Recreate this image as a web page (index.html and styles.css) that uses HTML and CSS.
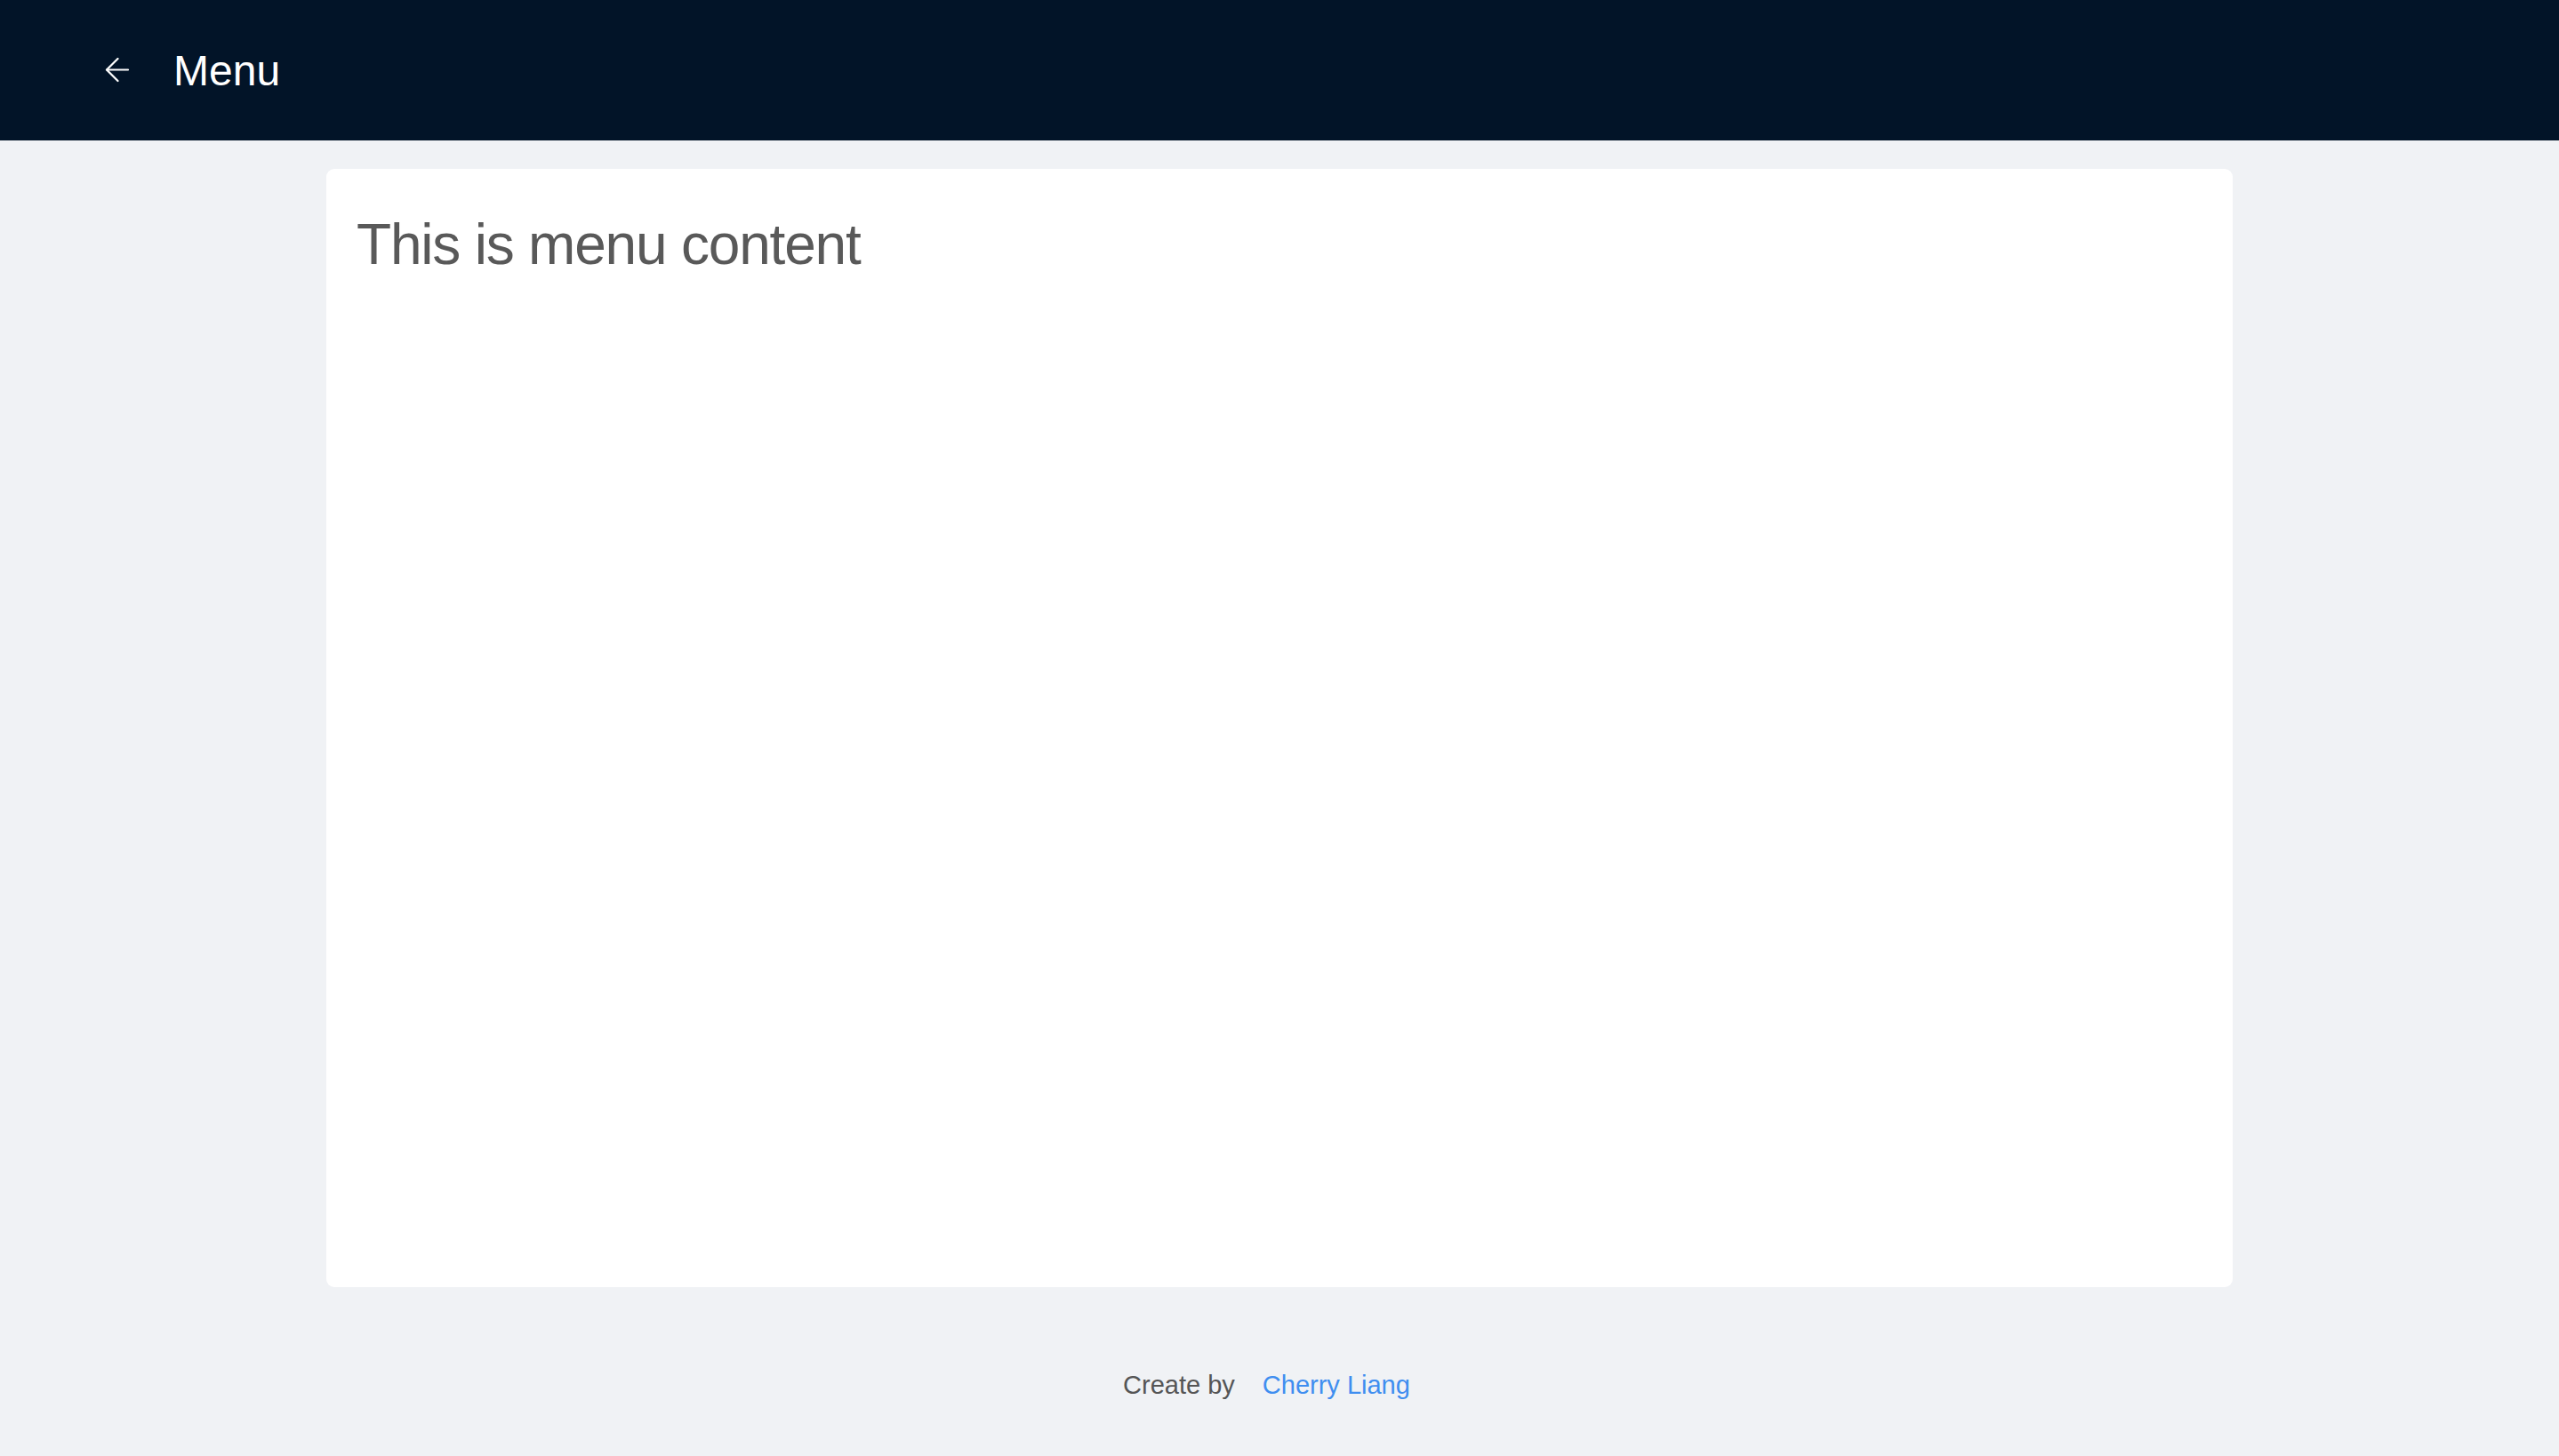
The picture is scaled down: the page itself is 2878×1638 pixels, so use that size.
FILE: index.html
```html
<!DOCTYPE html>
<html lang="en">
<head>
<meta charset="utf-8">
<title>Menu</title>
<link rel="stylesheet" href="styles.css">
</head>
<body>
<header class="topbar">
  <a class="back" href="#" aria-label="Back">
    <svg width="28" height="28" viewBox="0 0 28 28" fill="none" stroke="#ffffff" stroke-width="2.2" stroke-linecap="round" stroke-linejoin="round">
      <path d="M2 13.5 H26"/>
      <path d="M14.5 1 L2 13.5 L14.5 26"/>
    </svg>
  </a>
  <h1 class="title">Menu</h1>
</header>
<main class="main">
  <section class="card">
    <h2 class="card-heading">This is menu content</h2>
  </section>
</main>
<footer class="footer">
  <span class="footer-label">Create by</span>
  <a class="footer-link" href="#">Cherry Liang</a>
</footer>
</body>
</html>
```

FILE: styles.css
```css
html, body {
  margin: 0;
  padding: 0;
}
body {
  background: #f0f2f5;
  font-family: "Liberation Sans", Arial, sans-serif;
  min-height: 1638px;
}
.topbar {
  height: 158px;
  background: #021428;
  display: flex;
  align-items: center;
  padding-left: 118px;
  box-sizing: border-box;
}
.back {
  display: flex;
  width: 28px;
  height: 28px;
}
.title {
  margin: 0 0 0 49px;
  font-weight: 400;
  font-size: 48px;
  line-height: 1;
  color: #ffffff;
  padding-top: 2px;
}
.main {
  padding-top: 32px;
}
.card {
  width: 2144px;
  height: 1258px;
  margin: 0 auto;
  background: #ffffff;
  border-radius: 9px;
  box-sizing: border-box;
  padding: 37px 32px 37px 34px;
}
.card-heading {
  margin: 0;
  font-weight: 400;
  font-size: 64px;
  line-height: 1.5;
  letter-spacing: -1.2px;
  color: #595959;
}
.footer {
  display: flex;
  justify-content: center;
  align-items: baseline;
  padding: 89px 0 56px;
  font-size: 29px;
  line-height: 1.5;
}
.footer-label {
  color: #555555;
}
.footer-link {
  color: #3f8ef0;
  text-decoration: none;
  margin: 0 29px 0 31px;
}
```
